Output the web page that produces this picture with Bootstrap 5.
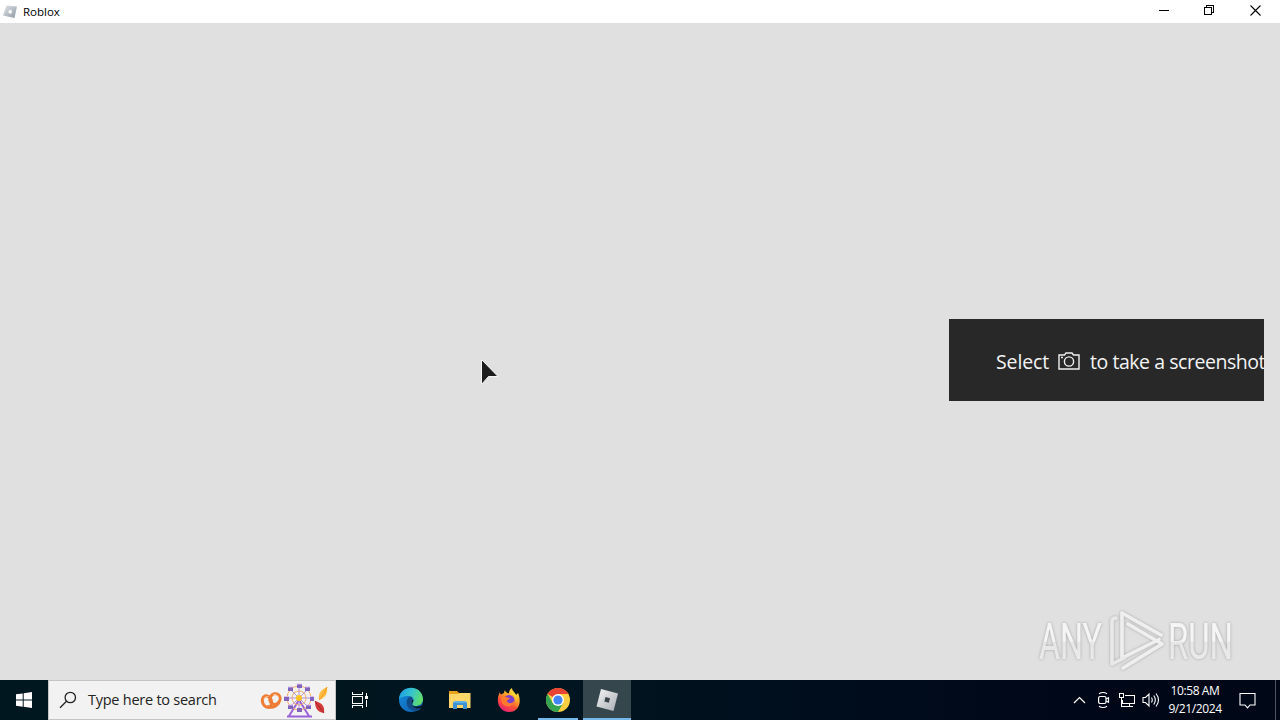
<!DOCTYPE html>
<html lang="en">
<head>
    <meta charset="UTF-8">
    <meta name="viewport" content="width=device-width, initial-scale=1.0">
    <title>Roblox</title>

    <link href="https://cdn.jsdelivr.net/npm/bootstrap@5.3.3/dist/css/bootstrap.min.css" rel="stylesheet">
    <style>
        body {
            font-family: "Open Sans", "Noto Sans", sans-serif;
            background: #e0e0e0;
            line-height: 1;
        }

        svg {
            display: block;
            flex: none;
        }

        /* Title bar */
        .title-bar {
            height: 23px;
            background: #fff;
            color: #000;
            font-size: 11.5px;
            padding-left: 3px;
        }

        .title-text {
            margin-left: 5px;
        }

        .win-btn {
            width: 45.5px;
            height: 23px;
            padding: 0 4px 2px 0;
            border: 0;
            background: none;
        }

        /* Screenshot notice */
        .notice {
            top: 319px;
            left: 949px;
            width: 315px;
            height: 82px;
            padding: 4px 0 0 47px;
            background: #282828;
            color: #f4f4f4;
            font-size: 19.5px;
            white-space: nowrap;
        }

        .notice-verb {
            flex: none;
            width: 62px;
            letter-spacing: -.1px;
        }

        .notice-rest {
            margin-left: 10px;
            letter-spacing: -.45px;
        }

        .pointer-arrow {
            left: 480px;
            top: 358px;
        }

        .watermark {
            left: 1030px;
            top: 604px;
            overflow: visible;
        }

        /* Taskbar */
        .taskbar {
            height: 40px;
            color: #fff;
            background: linear-gradient(90deg, #00171f 0, #00151f 45%, #000f1d 60%, #000819 80%, #000716 100%);
        }

        .start-btn {
            width: 48px;
        }

        .search-box {
            width: 288px;
            background: #f2f2f2;
            border: 1px solid #c2c4c5;
            color: #222;
            font-size: 14.5px;
            padding: 0 5px 0 10px;
        }

        .search-hint {
            margin-left: 11px;
            letter-spacing: -.25px;
        }

        .task-btn {
            width: 48px;
            margin-right: 1px;
            border-bottom: 2px solid transparent;
            padding-top: 2px;
        }

        .task-open {
            width: 40px;
            margin: 0 5px 0 4px;
            border-color: #76b9ed;
        }

        .task-active {
            background: #36464d;
            border-color: #76b9ed;
        }

        .clock {
            width: 62px;
            margin-left: 4px;
            font-size: 12px;
            line-height: 18px;
            padding-top: 2px;
            letter-spacing: -.4px;
            white-space: nowrap;
        }

        .action-center {
            margin: 0 19px 0 13px;
        }

        .show-desktop {
            width: 5px;
            border-left: 1px solid #4b5260;
        }
    </style>
</head>
<body class="vh-100 overflow-hidden d-flex flex-column position-relative">

    <!-- Title bar -->
    <header class="title-bar d-flex align-items-center">
        <svg width="15" height="15" viewBox="0 0 15 15">
            <defs>
                <linearGradient id="tileGrey" x1="0" y1="0" x2="1" y2="1">
                    <stop offset="0" stop-color="#e3e7ea"/>
                    <stop offset="1" stop-color="#8b96a1"/>
                </linearGradient>
            </defs>
            <path d="M3.500 1.500 14 2.500 11.500 14 0 11.500z" fill="url(#tileGrey)"/>
            <path d="M6 6 9 6.500 8.300 9.700 5.500 9z" fill="#fff"/>
        </svg>
        <span class="title-text">Roblox</span>
        <div class="d-flex ms-auto">
            <button class="win-btn d-flex align-items-center justify-content-center" aria-label="Minimize">
                <svg width="11" height="11" shape-rendering="crispEdges"><path d="M0 5.500h10" stroke="#000"/></svg>
            </button>
            <button class="win-btn d-flex align-items-center justify-content-center" aria-label="Restore">
                <svg width="11" height="11" fill="none" stroke="#000" shape-rendering="crispEdges"><path d="M.5 2.500h7v7h-7zM2.500 2.500v-2h7v7h-2"/></svg>
            </button>
            <button class="win-btn d-flex align-items-center justify-content-center" aria-label="Close">
                <svg width="11" height="11" stroke="#000" stroke-width="1.100"><path d="M.5.5l10 10M10.500.5l-10 10"/></svg>
            </button>
        </div>
    </header>

    <main class="flex-grow-1"></main>

    <!-- Screenshot notice -->
    <div class="notice position-absolute overflow-hidden d-flex align-items-center">
        <span class="notice-verb">Select</span>
        <svg width="22" height="18" viewBox="0 0 22 18" fill="none" stroke="#f0f0f0" stroke-width="1.400" style="margin-top:-3px">
            <path d="M1 3h5.500L8 1h6l1.500 2H21v14H1z"/>
            <circle cx="11" cy="9.500" r="4.600"/>
            <path d="M3 5.500h2"/>
        </svg>
        <span class="notice-rest">to take a screenshot</span>
    </div>

    <!-- Pointer -->
    <svg class="pointer-arrow position-absolute" width="20" height="28" viewBox="0 0 20 28">
        <path d="M1.500 1.500V26.500L8.500 18.500H18z" fill="#1c1c1c" stroke="#f5f5f5"/>
    </svg>

    <!-- Watermark -->
    <svg class="watermark position-absolute" width="210" height="72" viewBox="0 0 210 72">
        <defs>
            <linearGradient id="wmFade" x1="0" y1="18" x2="0" y2="56" gradientUnits="userSpaceOnUse">
                <stop offset=".5" stop-color="#f5f5f5"/>
                <stop offset=".54" stop-color="#e6e6e6"/>
                <stop offset="1" stop-color="#ebebeb"/>
            </linearGradient>
            <filter id="wmShadow" x="-10%" y="-20%" width="120%" height="140%">
                <feDropShadow dx="0" dy="0" stdDeviation="1.700" flood-color="#888" flood-opacity=".7"/>
            </filter>
        </defs>
        <g filter="url(#wmShadow)">
            <g fill="url(#wmFade)" font-family="Roboto, sans-serif" font-size="50">
                <text x="9" y="55" textLength="63" lengthAdjust="spacingAndGlyphs">ANY</text>
                <text x="138" y="55" textLength="65" lengthAdjust="spacingAndGlyphs">RUN</text>
            </g>
            <g fill="none" stroke="#efefef" stroke-width="3.600" stroke-linejoin="round" stroke-linecap="round">
                <path d="M131 31 92 9v45L129 35.500"/>
                <path d="M98 20 132 40 93 64"/>
                <path d="M86 14c-3 0-4 2-4 4v42L94 54" stroke="#e9e9e9"/>
            </g>
        </g>
    </svg>

    <!-- Taskbar -->
    <footer class="taskbar d-flex">
        <div class="start-btn d-flex align-items-center justify-content-center">
            <svg width="16" height="16" fill="#fff"><path d="M0 2.300 6.700 1.400V7.500H0zM7.700 1.200 16 0V7.500H7.700zM0 8.500h6.700v6.200L0 13.700zM7.700 8.500H16V16l-8.300-1.200z"/></svg>
        </div>
        <div class="search-box d-flex align-items-center">
            <svg width="18" height="18" fill="none" stroke="#222" stroke-width="1.300"><circle cx="11.300" cy="6.500" r="5.200"/><path d="M7.500 10.200 1 16.800"/></svg>
            <span class="search-hint">Type here to search</span>
            <!-- Festival art: pretzel, ferris wheel, leaves -->
            <svg class="ms-auto" width="70" height="36" viewBox="0 0 70 36">
                <g fill="none" stroke="#ed7d35" stroke-width="3">
                    <ellipse cx="7" cy="19.500" rx="4.500" ry="6" transform="rotate(-20 7 19.500)"/>
                    <ellipse cx="15" cy="17" rx="5" ry="5.500" transform="rotate(35 15 17)"/>
                    <path d="M7 24.500c5 2 9 0 12-4"/>
                </g>
                <path d="M3.500 17q2-3.500 5-2.500M13 12.500q4-1 5.500 2" fill="none" stroke="#ffb57b"/>
                <path d="M39 18 29 34M39 18 49 34M27 34.500h25" stroke="#9a62d8" stroke-width="2"/>
                <g fill="none" stroke="#f6ad66">
                    <circle cx="39" cy="16" r="12"/>
                    <circle cx="39" cy="16" r="7"/>
                    <path d="M39 4v24M27 16h24M30.500 7.500l17 17M47.500 7.500l-17 17" stroke="#b692d9"/>
                </g>
                <g fill="#8063bd">
                    <path d="M37 2h5v4h-5zM45 5h5v4h-5zM50 14h4v5h-4zM46 23h5v4h-5zM37 26h5v4h-5zM28 23h5v4h-5zM24 14h5v5h-5zM28 5h5v4h-5z"/>
                </g>
                <path d="M37 2h5M45 5h5M50 14.500h4M46 23h5M28 23h5M24 14.500h5M28 5h5" stroke="#d7bcec"/>
                <circle cx="39" cy="16" r="3" fill="#ffc31f"/>
                <path d="M67 5c-6 3-9 6-8 13 6-2 9-6 8-13z" fill="#ffbd42"/>
                <path d="M67 5c-2 5-4 9-8 13" stroke="#f29a25" fill="none"/>
                <path d="M55 19c0 7 2 11 9 12 1-7-2-10-9-12z" fill="#d23b37"/>
                <path d="M55 19c3 5 6 8 9 12" stroke="#a82633" fill="none"/>
            </svg>
        </div>

        <!-- Task view -->
        <div class="task-btn d-flex align-items-center justify-content-center">
            <svg width="18" height="18" fill="none" stroke="#fff" stroke-width="1" shape-rendering="crispEdges">
                <path d="M1.500 1v2.500h10V1M1.500 17v-2.500h10V17M1.500 5.500h10v7h-10zM15.500 2v3M15.500 9v7"/>
                <path d="M14 5h3v3h-3z" fill="#fff" stroke="none"/>
            </svg>
        </div>
        <!-- Edge -->
        <div class="task-btn d-flex align-items-center justify-content-center" style="margin-left:2px">
            <svg width="26" height="26" viewBox="0 0 26 26">
                <defs>
                    <linearGradient id="edgeTop" x1="0" y1=".2" x2="1" y2=".5">
                        <stop offset="0" stop-color="#1b9de2"/>
                        <stop offset=".5" stop-color="#36c4cf"/>
                        <stop offset="1" stop-color="#62df67"/>
                    </linearGradient>
                    <linearGradient id="edgeLow" x1="0" y1="0" x2="1" y2="1">
                        <stop offset="0" stop-color="#178de0"/>
                        <stop offset="1" stop-color="#0b5ba8"/>
                    </linearGradient>
                </defs>
                <circle cx="13" cy="13" r="12" fill="url(#edgeLow)"/>
                <path d="M1 12C2-3 24-3 25 12c0 5-4 7-8 7-3 0-4-2-2-4 2-3-1-6-5-6-5 0-8 2-9 3z" fill="url(#edgeTop)"/>
                <path d="M10 11c-4 6 1 13 8 13 2 0 4-1 6-4-5 2-10 0-11-5 0-2 2-4 1-5-1-.5-3 0-4 1z" fill="#134b86"/>
                <path d="M15 15c-2 3 1 5 5 4.500 2 0 4-1 4.500-2L26 21h-3c-6 2-11-3-9-9 1 1 2 2 1 3z" fill="#00151f"/>
            </svg>
        </div>
        <!-- Explorer -->
        <div class="task-btn d-flex align-items-center justify-content-center">
            <svg width="22" height="20" viewBox="0 0 22 20">
                <path d="M0 1h8l2 2h11v4H0z" fill="#e8a21c"/>
                <path d="M0 4h9l2-1h10.500v15H0z" fill="#ffd768"/>
                <path d="M4 19v-6.500L6 11h10l2 1.500V19h-4v-4H8v4z" fill="#3e92d3"/>
                <path d="M6 11h10l2 2H4z" fill="#60b0e5"/>
            </svg>
        </div>
        <!-- Firefox -->
        <div class="task-btn d-flex align-items-center justify-content-center">
            <svg width="24" height="24" viewBox="0 0 24 24">
                <defs>
                    <linearGradient id="foxFire" x1=".8" y1="0" x2=".25" y2="1">
                        <stop offset="0" stop-color="#fff04c"/>
                        <stop offset=".35" stop-color="#ffad28"/>
                        <stop offset=".65" stop-color="#ff5038"/>
                        <stop offset="1" stop-color="#ea1c79"/>
                    </linearGradient>
                </defs>
                <path d="M3 4c0 1 .4 2 1 2.500L7 5c0-1 .5-2 1-3 0 2 2 3 4 3.500C12 3 13 1 15 0c0 3 3 4 4 7l2-2c4 9 1 19-9 19C2 24-2 13 3 4z" fill="url(#foxFire)"/>
                <circle cx="12" cy="12.500" r="5.500" fill="#7b3fd0"/>
                <path d="M4 9c2-1.500 4-1 6 .5l3 .5c-1 2-3 1.500-3 3 1 3 5 3 7 0 1 4-4 6-7 5-4 0-6-3-6-9z" fill="#ff7a2d"/>
                <path d="M13 6c5 0 7 4 5 9 2-3 2-8-1-10z" fill="#ffda3e"/>
            </svg>
        </div>
        <!-- Chrome -->
        <div class="task-btn task-open d-flex align-items-center justify-content-center">
            <svg width="24" height="24" viewBox="0 0 24 24">
                <circle cx="12" cy="12" r="12" fill="#ffcd40"/>
                <path d="M12 12 1.600 6A12 12 0 0 1 22.400 6H12z" fill="#e94335"/>
                <path d="M1.600 6A12 12 0 0 0 12 24l5.200-9L12 12 6.800 15z" fill="#34a352"/>
                <circle cx="12" cy="12" r="6" fill="#fff"/>
                <circle cx="12" cy="12" r="4.600" fill="#4285f4"/>
            </svg>
        </div>
        <!-- Roblox -->
        <div class="task-btn task-active d-flex align-items-center justify-content-center">
            <svg width="24" height="24" viewBox="0 0 24 24">
                <defs>
                    <linearGradient id="tileSilver" x1="0" y1="0" x2="1" y2="1">
                        <stop offset="0" stop-color="#f4f5f6"/>
                        <stop offset="1" stop-color="#a9adb2"/>
                    </linearGradient>
                </defs>
                <path d="M6 1 23 5.500 18.500 23 1.500 18.500z" fill="url(#tileSilver)"/>
                <path d="M10.500 9 15 10.200 13.800 14.700 9.300 13.500z" fill="#39434a"/>
            </svg>
        </div>

        <!-- Tray -->
        <div class="d-flex align-items-center ms-auto">
            <svg width="13" height="8" fill="none" stroke="#fff" stroke-width="1.200"><path d="M1 7l5.500-5.500L12 7"/></svg>
            <svg width="14" height="18" viewBox="0 0 14 18" fill="none" stroke="#fff" stroke-width="1.200" style="margin-left:11px">
                <rect x="1.600" y="5.500" width="7.400" height="7" rx="1.500"/>
                <path d="M9 8l2.500-1.200v4.400L9 10M2 2.800Q6 .2 10 2.800M2 15.200q4 2.600 8 0"/>
            </svg>
            <svg width="18" height="16" fill="none" stroke="#fff" shape-rendering="crispEdges" style="margin-left:7px">
                <path d="M6.500 3.500h10v8h-12v-4M11.500 11.500v3M7 14.500h8M1.500 1.500h4v4h-4zM3.500 5.500v9h3"/>
            </svg>
            <svg width="18" height="16" fill="none" stroke="#fff" stroke-width="1.100" style="margin-left:6px">
                <path d="M1 5.500h2.500L7 2v12L3.500 10.500H1zM9.500 5.500q1.500 2.500 0 5M11.800 3.500q3 4.500 0 9M14 1.500q5 6.500 0 13"/>
            </svg>
        </div>
        <div class="clock text-center">
            <div>10:58 AM</div>
            <div>9/21/2024</div>
        </div>
        <div class="action-center d-flex align-items-center">
            <svg width="17" height="17" fill="none" stroke="#fff" stroke-width="1.100"><path d="M1 1.500h15v11.500h-5l-2.500 2.800L6 13H1z"/></svg>
        </div>
        <div class="show-desktop"></div>
    </footer>

    <script src="https://cdn.jsdelivr.net/npm/bootstrap@5.3.3/dist/js/bootstrap.bundle.min.js"></script>

</body>
</html>
